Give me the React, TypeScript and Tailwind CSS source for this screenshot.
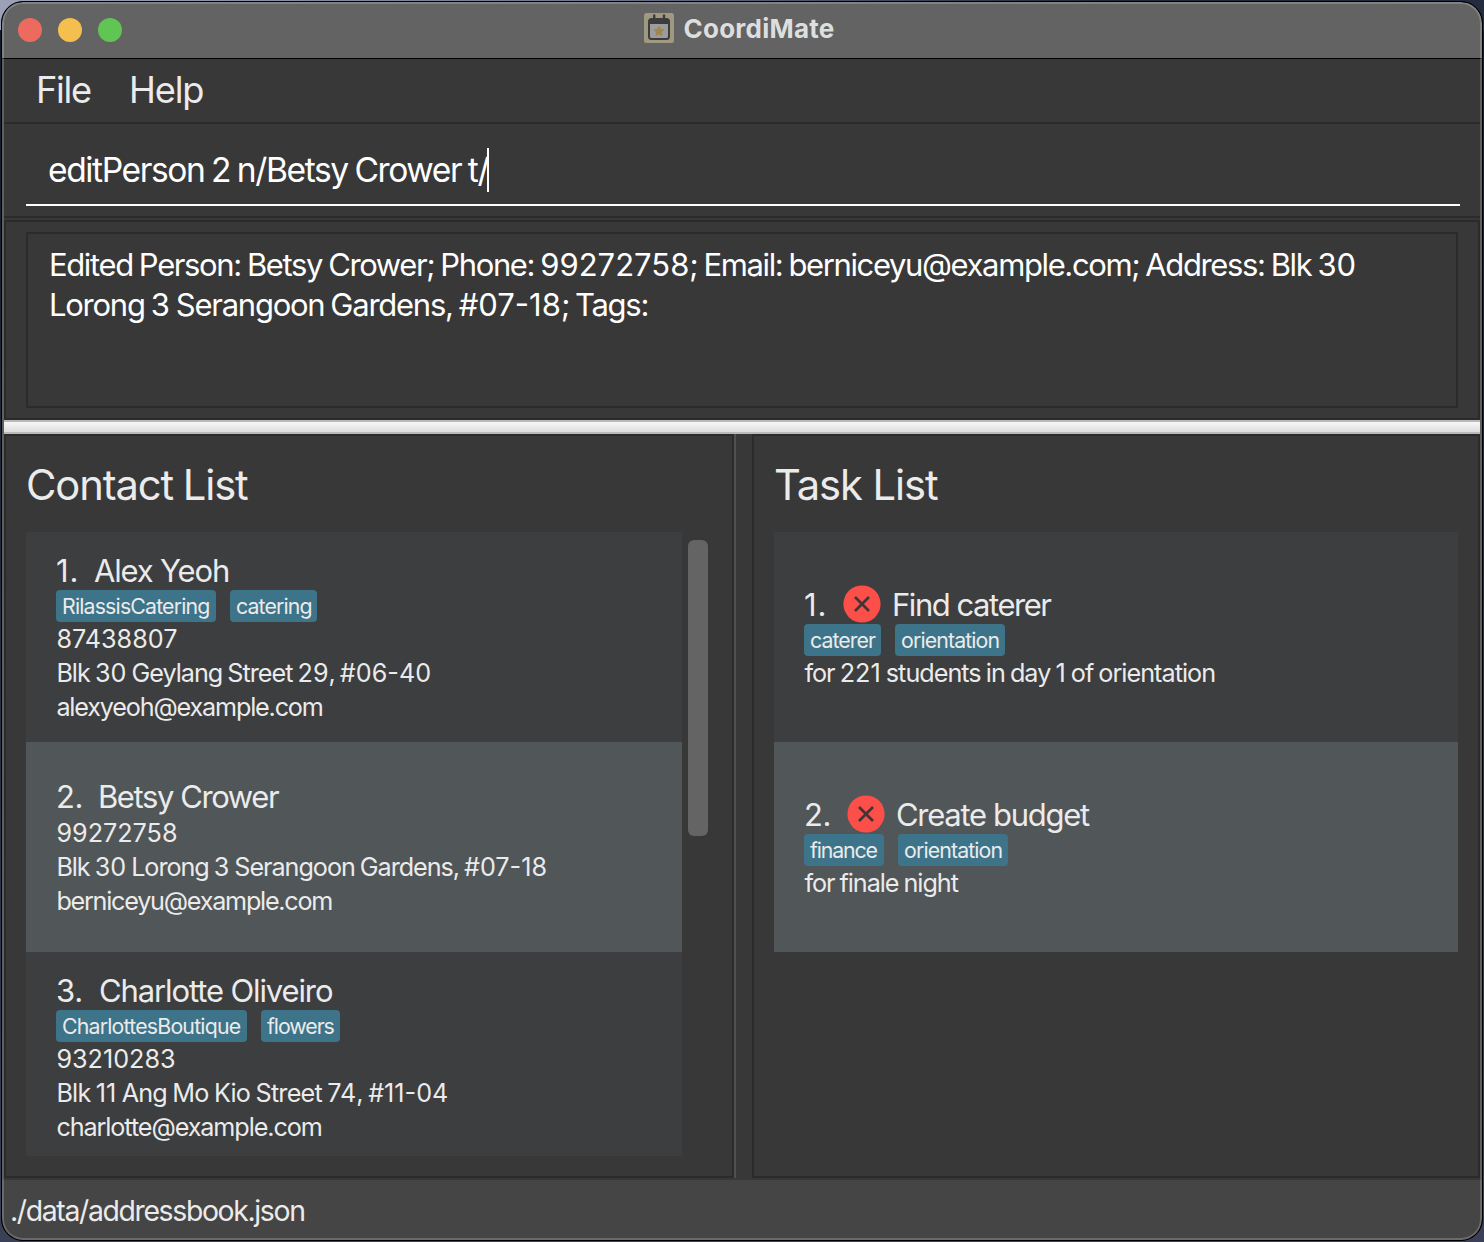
type Tag = { label: string; box: string };
type Contact = {
  index: string;
  indexBox: string;
  name: string;
  nameTracking: string;
  tags: Tag[];
  phone: string;
  address: string;
  addressTracking: string;
  email: string;
  emailTracking: string;
  row: string;
};
type Task = {
  index: string;
  indexBox: string;
  title: string;
  titleBox: string;
  tags: Tag[];
  note: string;
  noteTracking: string;
  row: string;
};

const contacts: Contact[] = [
  {
    index: "1.", indexBox: "w-[38px] tracking-[0.8px]", name: "Alex Yeoh", nameTracking: "tracking-[-1.17px]",
    tags: [
      { label: "RilassisCatering", box: "w-[160px] tracking-[-0.82px]" },
      { label: "catering", box: "w-[87px] tracking-[-0.86px]" },
    ],
    phone: "87438807",
    address: "Blk 30 Geylang Street 29, #06-40", addressTracking: "tracking-[-1px]",
    email: "alexyeoh@example.com", emailTracking: "tracking-[-1.18px]",
    row: "h-[210px] bg-[#3c3e3f] pt-5",
  },
  {
    index: "2.", indexBox: "w-[42px] tracking-[-0.5px]", name: "Betsy Crower", nameTracking: "tracking-[-1.41px]",
    tags: [],
    phone: "99272758",
    address: "Blk 30 Lorong 3 Serangoon Gardens, #07-18", addressTracking: "tracking-[-1.05px]",
    email: "berniceyu@example.com", emailTracking: "tracking-[-1.25px]",
    row: "h-[210px] bg-[#515658] pt-9",
  },
  {
    index: "3.", indexBox: "w-[43px] tracking-[-0.1px]", name: "Charlotte Oliveiro", nameTracking: "tracking-[-1.12px]",
    tags: [
      { label: "CharlottesBoutique", box: "w-[191px] tracking-[-0.8px]" },
      { label: "flowers", box: "w-[79px] tracking-[-1.05px]" },
    ],
    phone: "93210283",
    address: "Blk 11 Ang Mo Kio Street 74, #11-04", addressTracking: "tracking-[-0.77px]",
    email: "charlotte@example.com", emailTracking: "tracking-[-1.09px]",
    row: "h-[204px] bg-[#3c3e3f] pt-5",
  },
];

const tasks: Task[] = [
  {
    index: "1.", indexBox: "w-[39px] tracking-[0.8px]", title: "Find caterer", titleBox: "ml-[11px] tracking-[-1.46px]",
    tags: [
      { label: "caterer", box: "w-[77px] tracking-[-0.93px]" },
      { label: "orientation", box: "w-[110px] tracking-[-0.87px]" },
    ],
    note: "for 221 students in day 1 of orientation", noteTracking: "tracking-[-0.98px]",
    row: "bg-[#3c3e3f]",
  },
  {
    index: "2.", indexBox: "w-[43px] tracking-[-0.5px]", title: "Create budget", titleBox: "ml-[11px] tracking-[-1.3px]",
    tags: [
      { label: "finance", box: "w-[80px] tracking-[-1.15px]" },
      { label: "orientation", box: "w-[110px] tracking-[-0.87px]" },
    ],
    note: "for finale night", noteTracking: "tracking-[-1.04px]",
    row: "bg-[#515658]",
  },
];

/** Keeps digit runs at their natural spacing inside tightly tracked text. */
function Mixed({ text }: { text: string }) {
  return (
    <>
      {text.split(/([\d#-]+)/).map((part, i) =>
        i % 2 === 1 ? <span key={i} className="tracking-normal">{part}</span> : part,
      )}
    </>
  );
}

function Tags({ tags }: { tags: Tag[] }) {
  if (tags.length === 0) return null;
  return (
    <div className="flex gap-[14px]">
      {tags.map((t) => (
        <span key={t.label} className={`h-8 rounded bg-[#3e7489] pl-[6px] text-[21.3px] leading-8 ${t.box}`}>
          {t.label}
        </span>
      ))}
    </div>
  );
}

function CrossIcon() {
  return (
    <svg width="38" height="38" viewBox="0 0 38 38" className="shrink-0 overflow-visible">
      <circle cx="19" cy="18" r="18.6" fill="#fc4f4a" />
      <path d="M12 11l14 14M26 11L12 25" stroke="#403536" strokeWidth="2.7" fill="none" />
    </svg>
  );
}

function AppIcon() {
  return (
    <svg width="30" height="30" viewBox="0 0 30 30">
      <rect width="30" height="30" rx="2.5" fill="#a09982" />
      <path d="M10.2 1.5v5M20 1.5v5" stroke="#3c3c3d" strokeWidth="2.4" />
      <rect x="4" y="5" width="22" height="22" rx="3.5" fill="#3c3c3d" />
      <path d="M6 11h18v12.500a1.500 1.500 0 0 1-1.500 1.500h-15a1.500 1.500 0 0 1-1.500-1.500z" fill="#9c9c9c" />
      <path
        d="M15 13.300l1.500 3.100 3.300.4-2.400 2.300.6 3.400-3-1.600-3 1.600.6-3.400-2.400-2.300 3.300-.4z"
        fill="#a08748" stroke="#a08748" strokeWidth=".8" strokeLinejoin="round"
      />
    </svg>
  );
}

export default function App() {
  return (
    <div className="h-[1242px] w-[1484px] overflow-hidden bg-[linear-gradient(to_right,#9da1b8,#6d7690_40%,#1f2738_75%,#232c3e),linear-gradient(#131a2a,#3a4157)] bg-[length:100%_30px,100%_100%] bg-no-repeat px-px pt-px pb-px font-[Inter,sans-serif] text-[#ebebeb]">
      <div className="h-[1240px] w-[1482px] overflow-hidden rounded-[22px] border border-black bg-black">
        <div className="flex h-[1238px] flex-col overflow-hidden rounded-[21px] border-2 border-white/20 bg-[linear-gradient(#636363_56px,#000_56px,#000_57px,#383838_57px,#383838_1178px,#454545_1178px)] bg-origin-border whitespace-nowrap">
          <header className="relative flex h-[54px] shrink-0 items-center justify-center">
            <div className="absolute top-[14px] left-[14px] flex gap-4">
              <span className="size-6 rounded-full bg-[#ed6a5e]" />
              <span className="size-6 rounded-full bg-[#f5bf4f]" />
              <span className="size-6 rounded-full bg-[#61c554]" />
            </div>
            <div className="mr-[5px] -mt-[6px] flex items-center gap-[9px]">
              <AppIcon />
              <h1 className="pt-px text-[26px] leading-[30px] font-bold tracking-[0.25px] text-[#dedede]">CoordiMate</h1>
            </div>
          </header>

          <nav className="mt-px flex h-[65px] shrink-0 border-b-2 border-[#2b2b2b] pl-8 text-[36.2px] leading-[62px]">
            <span className="w-[93px] tracking-[-1.3px]">File</span>
            <span className="tracking-[-1.15px]">Help</span>
          </nav>

          <div className="h-[94px] shrink-0 border-b-2 border-[#2b2b2b] pr-5 pl-[22px]">
            <div className="flex h-[82px] items-center border-b-2 border-white pl-[22px] text-[33.6px] text-white">
              <span className="pt-3 tracking-[-1.4px] [word-spacing:-1.4px]">editPerson 2 n/Betsy Crower t/</span>
              <span className="mt-3 -ml-px h-11 w-[2px] bg-white" />
            </div>
          </div>

          <div className="mt-[2px] h-[200px] shrink-0 border-2 border-[#2b2b2b] px-5 pt-[10px]">
            <div className="h-[176px] border-2 border-[#2b2b2b] pt-[11px] pl-[21px] text-[31px] leading-10 text-white">
              <div className="tracking-[-1.38px] [word-spacing:-1.2px]">
                <Mixed text="Edited Person: Betsy Crower; Phone: 99272758; Email: berniceyu@example.com; Address: Blk 30" />
              </div>
              <div className="tracking-[-1.25px] [word-spacing:-1.5px]">
                <Mixed text="Lorong 3 Serangoon Gardens, #07-18; Tags:" />
              </div>
            </div>
          </div>

          <div className="h-[14px] shrink-0 border-y-2 border-[#bababa] bg-linear-to-b from-[#f8f8f8] to-[#dedede]" />

          <main className="flex h-[744px] shrink-0">
            <section className="w-[730px] border-2 border-[#2b2b2b] pl-5">
              <h2 className="h-24 pt-[18px] text-[41.7px] leading-[62px] tracking-[-1.1px] [word-spacing:-1px]">Contact List</h2>
              <div className="flex gap-[6px]">
                <div className="w-[656px]">
                  {contacts.map((c) => (
                    <article key={c.index} className={`pl-[30px] text-[25.2px] leading-[34px] ${c.row}`}>
                      <h3 className="flex h-[38px] text-[31px] leading-[38px]">
                        <span className={c.indexBox}>{c.index}</span>
                        <span className={c.nameTracking}>{c.name}</span>
                      </h3>
                      <Tags tags={c.tags} />
                      <p className="pl-[0.4px]">{c.phone}</p>
                      <p className={`pl-[0.4px] [word-spacing:-1px] ${c.addressTracking}`}><Mixed text={c.address} /></p>
                      <p className={`pl-[0.4px] ${c.emailTracking}`}>{c.email}</p>
                    </article>
                  ))}
                </div>
                <div className="mt-2 h-[296px] w-5 rounded-[6px] bg-[#646464]" />
              </div>
            </section>
            <div className="w-[18px] border-l-2 border-[#505050]" />
            <section className="w-[728px] border-2 border-[#2b2b2b] px-5">
              <h2 className="h-24 pt-[18px] text-[41.7px] leading-[62px] tracking-[-1.07px]">Task List</h2>
              {tasks.map((t) => (
                <article key={t.index} className={`h-[210px] pt-[54px] pl-[30px] text-[25.2px] leading-[34px] ${t.row}`}>
                  <h3 className="flex h-[38px] text-[31px] leading-[38px]">
                    <span className={t.indexBox}>{t.index}</span>
                    <CrossIcon />
                    <span className={t.titleBox}>{t.title}</span>
                  </h3>
                  <Tags tags={t.tags} />
                  <p className={`pl-[0.4px] [word-spacing:-1px] ${t.noteTracking}`}><Mixed text={t.note} /></p>
                </article>
              ))}
            </section>
          </main>

          <footer className="mt-[2px] h-[58px] shrink-0 pl-[6px] text-[28.4px] leading-[62px] tracking-[-1.35px]">
            ./data/addressbook.json
          </footer>
        </div>
      </div>
    </div>
  );
}
